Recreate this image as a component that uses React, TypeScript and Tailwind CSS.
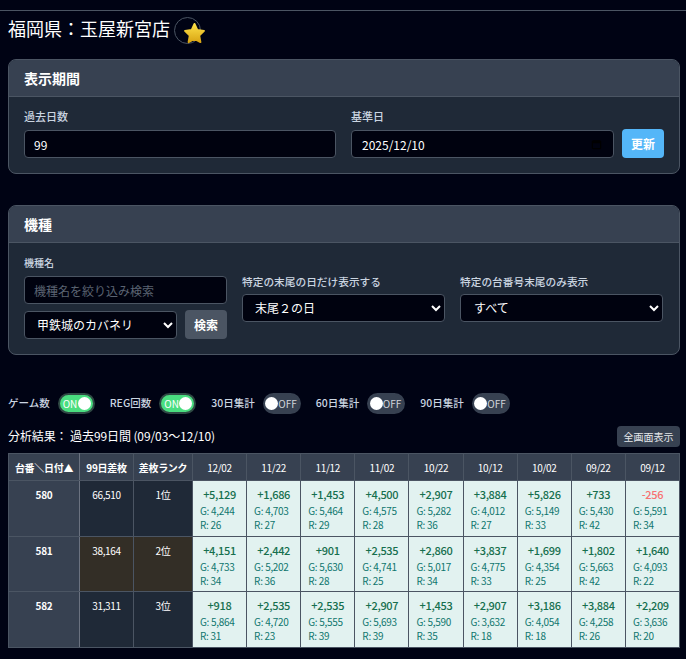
const font = "[font-family:'Noto_Sans_CJK_JP','Noto_Sans',sans-serif]";

const dates = ['12/02', '11/22', '11/12', '11/02', '10/22', '10/12', '10/02', '09/22', '09/12'];

type Cell = [string, string, number];

const rows: { no: number; total: string; rank: string; hi?: boolean; h: string; cells: Cell[] }[] = [
  {
    no: 580,
    total: '66,510',
    rank: '1位',
    h: 'h-[56px]',
    cells: [
      ['+5,129', '4,244', 26],
      ['+1,686', '4,703', 27],
      ['+1,453', '5,464', 29],
      ['+4,500', '4,575', 28],
      ['+2,907', '5,282', 36],
      ['+3,884', '4,012', 27],
      ['+5,826', '5,149', 33],
      ['+733', '5,430', 42],
      ['-256', '5,591', 34],
    ],
  },
  {
    no: 581,
    total: '38,164',
    rank: '2位',
    hi: true,
    h: 'h-[55px]',
    cells: [
      ['+4,151', '4,733', 34],
      ['+2,442', '5,202', 36],
      ['+901', '5,630', 28],
      ['+2,535', '4,741', 25],
      ['+2,860', '5,017', 34],
      ['+3,837', '4,775', 33],
      ['+1,699', '4,354', 25],
      ['+1,802', '5,663', 42],
      ['+1,640', '4,093', 22],
    ],
  },
  {
    no: 582,
    total: '31,311',
    rank: '3位',
    h: 'h-[56px]',
    cells: [
      ['+918', '5,864', 31],
      ['+2,535', '4,720', 23],
      ['+2,535', '5,555', 39],
      ['+2,907', '5,693', 39],
      ['+1,453', '5,590', 35],
      ['+2,907', '3,632', 18],
      ['+3,186', '4,054', 18],
      ['+3,884', '4,258', 26],
      ['+2,209', '3,636', 20],
    ],
  },
];

function Toggle({ label, on }: { label: string; on?: boolean }) {
  return (
    <div className="flex items-center gap-2">
      <span className="pb-[1px] text-[10.5px] font-medium text-[#cbd5e1]">{label}</span>
      <div
        className={`flex h-[21px] items-center justify-between rounded-full border-2 px-[1px] text-[10px] ${
          on ? 'w-[37px] flex-row border-[#2f4a44] bg-[#4ade80]' : 'w-[38px] flex-row-reverse border-[#374151] bg-[#374151]'
        } text-white`}
      >
        <span className={on ? 'ml-[2px]' : 'mr-[1px] text-[#d1d5db]'}>{on ? 'ON' : 'OFF'}</span>
        <span className={`h-[13px] w-[13px] shrink-0 rounded-full bg-white ${on ? 'mr-[1px]' : 'ml-[1px]'}`} />
      </div>
    </div>
  );
}

function Card({ title, children }: { title: string; children: React.ReactNode }) {
  return (
    <section className="overflow-hidden rounded-lg border border-[#4b5563] bg-[#1f2937]">
      <h2 className="flex h-[37px] items-center border-b border-[#4b5563] bg-[#374151] px-[15px] text-sm font-bold text-white">
        {title}
      </h2>
      {children}
    </section>
  );
}

function StarBadge() {
  return (
    <div className="relative mt-[1px] h-[27px] w-[27px] rounded-full border border-[#4b5563]">
      <svg viewBox="0 0 24 24" className="absolute left-[8px] top-[4px] h-[23px] w-[23px]">
        <defs>
          <linearGradient id="star" x1="0" y1="0" x2="0" y2="1">
            <stop offset="0" stopColor="#fde047" />
            <stop offset="1" stopColor="#d9a514" />
          </linearGradient>
        </defs>
        <path
          d="M12 2l3 6.4 6.9.9-5 4.8 1.3 6.9L12 17.6 5.800 21l1.300-6.900-5-4.800 6.900-.9z"
          fill="url(#star)"
          stroke="url(#star)"
          strokeWidth="2"
          strokeLinejoin="round"
        />
      </svg>
    </div>
  );
}

export default function App() {
  const field =
    'h-[28px] w-full rounded border border-[#4b5563] bg-[#00020f] text-xs text-white';

  return (
    <div className={`${font} h-[659px] w-[686px] overflow-hidden bg-[#000314] text-white`}>
      <div className="h-[11px] border-b border-[#4b5563]" />

      <div className="flex items-start gap-[4px] px-2 pt-[5px]">
        <h1 className="text-[18px] leading-[24px] font-normal">福岡県：玉屋新宮店</h1>
        <StarBadge />
      </div>

      <div className="mx-2 mt-[15px] w-[672px]">
        <Card title="表示期間">
          <div className="flex items-end px-[15px] pb-[15px] pt-[11px]">
            <div className="w-[312px]">
              <label className="mb-[6px] block text-[11px] leading-[16px] font-medium text-[#cbd5e1]">過去日数</label>
              <input className={`${field} px-[9px] outline-none`} defaultValue="99" />
            </div>
            <div className="ml-[15px] flex-1">
              <label className="mb-[6px] block text-[11px] leading-[16px] font-medium text-[#cbd5e1]">基準日</label>
              <div className={`${field} flex items-center justify-between pl-[10px] pr-[11px]`}>
                <span className="pt-[1px]">2025/12/10</span>
                <svg viewBox="0 0 12 12" className="h-[11px] w-[11px] text-black">
                  <rect x="1.500" y="2" width="9" height="8.500" rx="1" fill="none" stroke="currentColor" strokeWidth="1.400" />
                  <path d="M1.500 3.500h9" stroke="currentColor" strokeWidth="2" />
                </svg>
              </div>
            </div>
            <button className="ml-2 h-[29px] w-[42px] rounded bg-[#54b6f8] text-xs font-bold text-white">更新</button>
          </div>
        </Card>
      </div>

      <div className="mx-2 mt-[31px] w-[672px]">
        <Card title="機種">
          <div className="grid grid-cols-[203px_203px_203px] items-center gap-[15px] px-[15px] pb-[15px] pt-[12px]">
            <div>
              <label className="mb-[6px] block text-[10px] leading-[15px] font-medium text-[#cbd5e1]">機種名</label>
              <input
                className={`${field} px-[9px] outline-none placeholder:text-[#5b6472]`}
                placeholder="機種名を絞り込み検索"
              />
              <div className="mt-[6px] flex items-center gap-2">
                <select className={`${field} min-w-0 flex-1 px-[8px]`}>
                  <option>甲鉄城のカバネリ</option>
                </select>
                <button className="h-[29px] w-[42px] shrink-0 rounded bg-[#4b5563] text-xs font-bold text-white">検索</button>
              </div>
            </div>
            <div className="pt-[1px]">
              <label className="mb-[5px] block text-[10.7px] leading-[15px] font-medium text-[#cbd5e1]">特定の末尾の日だけ表示する</label>
              <select className={`${field} px-[8px]`}>
                <option>末尾２の日</option>
              </select>
            </div>
            <div className="pt-[1px]">
              <label className="mb-[5px] block text-[10.7px] leading-[15px] font-medium text-[#cbd5e1]">特定の台番号末尾のみ表示</label>
              <select className={`${field} px-[9px]`}>
                <option>すべて</option>
              </select>
            </div>
          </div>
        </Card>
      </div>

      <div className="mt-[38px] flex gap-[15px] pl-2">
        <Toggle label="ゲーム数" on />
        <Toggle label="REG回数" on />
        <Toggle label="30日集計" />
        <Toggle label="60日集計" />
        <Toggle label="90日集計" />
      </div>

      <div className="mx-2 mt-[11px] flex h-[22px] w-[672px] items-center justify-between">
        <p className="text-xs tracking-[-0.1px]">分析結果： 過去99日間 (09/03〜12/10)</p>
        <button className="h-[21px] w-[63px] rounded bg-[#374151] text-[10px] text-[#e5e7eb]">全画面表示</button>
      </div>

      <table className="ml-2 mt-[6px] w-[672px] table-fixed border-collapse text-center text-[10px] tracking-[-0.3px]">
        <colgroup>
          <col className="w-[71px]" />
          <col className="w-[54px]" />
          <col className="w-[59px]" />
          {dates.map((d) => (
            <col key={d} />
          ))}
        </colgroup>
        <thead>
          <tr className="h-[27px] bg-[#374151]">
            <th className="border border-[#4b5563] border-r-[#6b7280] font-bold">台番＼日付▲</th>
            <th className="border border-[#4b5563] font-bold">99日差枚</th>
            <th className="border border-[#4b5563] font-bold">差枚ランク</th>
            {dates.map((d) => (
              <th key={d} className="border border-[#4b5563] font-normal">
                {d}
              </th>
            ))}
          </tr>
        </thead>
        <tbody>
          {rows.map((r) => (
            <tr key={r.no} className={r.h}>
              <td className="border border-[#4b5563] border-r-[#6b7280] bg-[#374151] pt-[6px] align-top font-bold">{r.no}</td>
              <td className={`border border-[#4b5563] pt-[6px] align-top ${r.hi ? 'bg-[#332e26]' : 'bg-[#1f2937]'}`}>{r.total}</td>
              <td className={`border border-[#4b5563] pt-[6px] align-top ${r.hi ? 'bg-[#332e26]' : 'bg-[#1f2937]'}`}>{r.rank}</td>
              {r.cells.map(([diff, g, reg], i) => (
                <td key={i} className="border border-[#4b5563] bg-[#e2f2f0] px-[7px] align-top text-[#0f766e]">
                  <div className={`mt-[5px] text-[11px] leading-[16px] font-medium ${diff.startsWith('-') ? 'text-[#f87171]' : 'text-[#166f4e]'}`}>
                    {diff}
                  </div>
                  <div className="mt-[1px] text-left leading-[15px]">G: {g}</div>
                  <div className="text-left leading-[14px]">R: {reg}</div>
                </td>
              ))}
            </tr>
          ))}
        </tbody>
      </table>
    </div>
  );
}
